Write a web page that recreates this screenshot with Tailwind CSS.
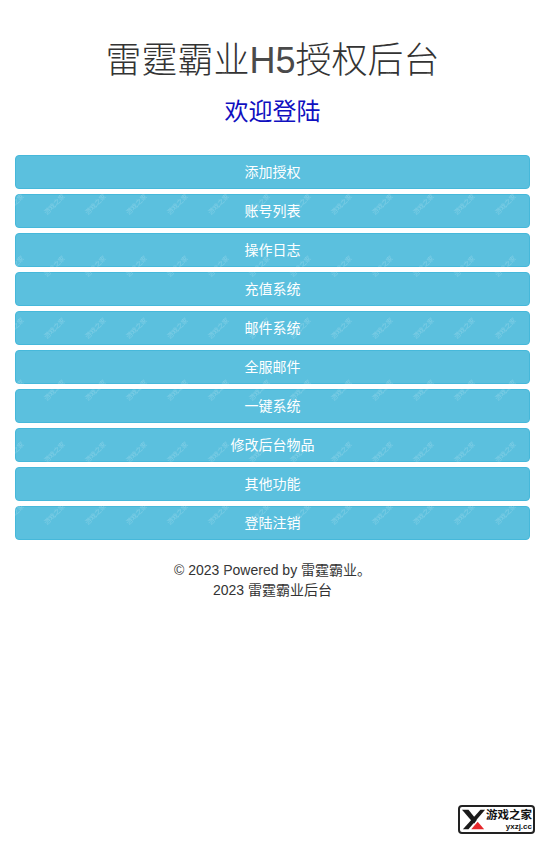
<!DOCTYPE html>
<html lang="zh-CN">

<head>
    <meta charset="UTF-8" />
    <title>雷霆霸业H5授权后台</title>
    <script src="https://cdn.jsdelivr.net/npm/@tailwindcss/browser@4"></script>
</head>

<body class="relative h-[843px] overflow-hidden bg-white text-[#333] font-['Liberation_Sans','Noto_Sans_CJK_SC',sans-serif]">

    <div class="px-[15px] text-center">
        <h1 class="pt-[41px] text-[36px] leading-[40px] font-light">雷霆霸业<span class="text-[#4a4a4a]">H5</span>授权后台</h1>
        <h3 class="mt-[18px] text-[24px] leading-[26px] font-normal text-[#1010c0]">欢迎登陆</h3>

        <div class="mt-[30px] flex flex-col gap-[5px] text-sm text-white">
            <a class="h-[34px] rounded border border-[#46b8da] bg-[#5bc0de] leading-[32px]">添加授权</a>
            <a class="h-[34px] rounded border border-[#46b8da] bg-[#5bc0de] leading-[32px]">账号列表</a>
            <a class="h-[34px] rounded border border-[#46b8da] bg-[#5bc0de] leading-[32px]">操作日志</a>
            <a class="h-[34px] rounded border border-[#46b8da] bg-[#5bc0de] leading-[32px]">充值系统</a>
            <a class="h-[34px] rounded border border-[#46b8da] bg-[#5bc0de] leading-[32px]">邮件系统</a>
            <a class="h-[34px] rounded border border-[#46b8da] bg-[#5bc0de] leading-[32px]">全服邮件</a>
            <a class="h-[34px] rounded border border-[#46b8da] bg-[#5bc0de] leading-[32px]">一键系统</a>
            <a class="h-[34px] rounded border border-[#46b8da] bg-[#5bc0de] leading-[32px]">修改后台物品</a>
            <a class="h-[34px] rounded border border-[#46b8da] bg-[#5bc0de] leading-[32px]">其他功能</a>
            <a class="h-[34px] rounded border border-[#46b8da] bg-[#5bc0de] leading-[32px]">登陆注销</a>
        </div>

        <footer class="mt-[20px] text-sm leading-[20px]">
            <p>© 2023 Powered by 雷霆霸业。</p>
            <p>2023 雷霆霸业后台</p>
        </footer>
    </div>

    <!-- watermark over the buttons -->
    <svg class="absolute inset-0 pointer-events-none" width="545" height="843">
        <defs>
            <pattern id="wm" x="0" y="6" width="41" height="62" patternUnits="userSpaceOnUse">
                <text transform="translate(6 23) rotate(-45)" font-size="6.5" fill="#fff" fill-opacity="0.22" font-family="Noto Sans CJK SC">游戏之家</text>
            </pattern>
        </defs>
        <rect width="545" height="843" fill="url(#wm)" />
    </svg>

    <!-- site badge -->
    <div class="absolute left-[458px] top-[805px] flex h-[29px] w-[77px] items-center rounded-[4px] border-2 border-[#222] bg-white pl-[2px]">
        <svg class="shrink-0" width="24" height="23" viewBox="0 0 26 23">
            <path d="M0 1h7l9 11-3 4z" fill="#1a1a1a" />
            <path d="M25 1h-5L1 22h6z" fill="#1a1a1a" />
            <path d="M17 14l7 8H10z" fill="#e5262b" />
        </svg>
        <div class="flex flex-col items-end">
            <span class="text-[11.5px] leading-[13px] font-bold text-[#111] whitespace-nowrap">游戏之家</span>
            <span class="text-[8px] leading-[9px] font-bold text-[#111]">yxzj.cc</span>
        </div>
    </div>

</body>

</html>
